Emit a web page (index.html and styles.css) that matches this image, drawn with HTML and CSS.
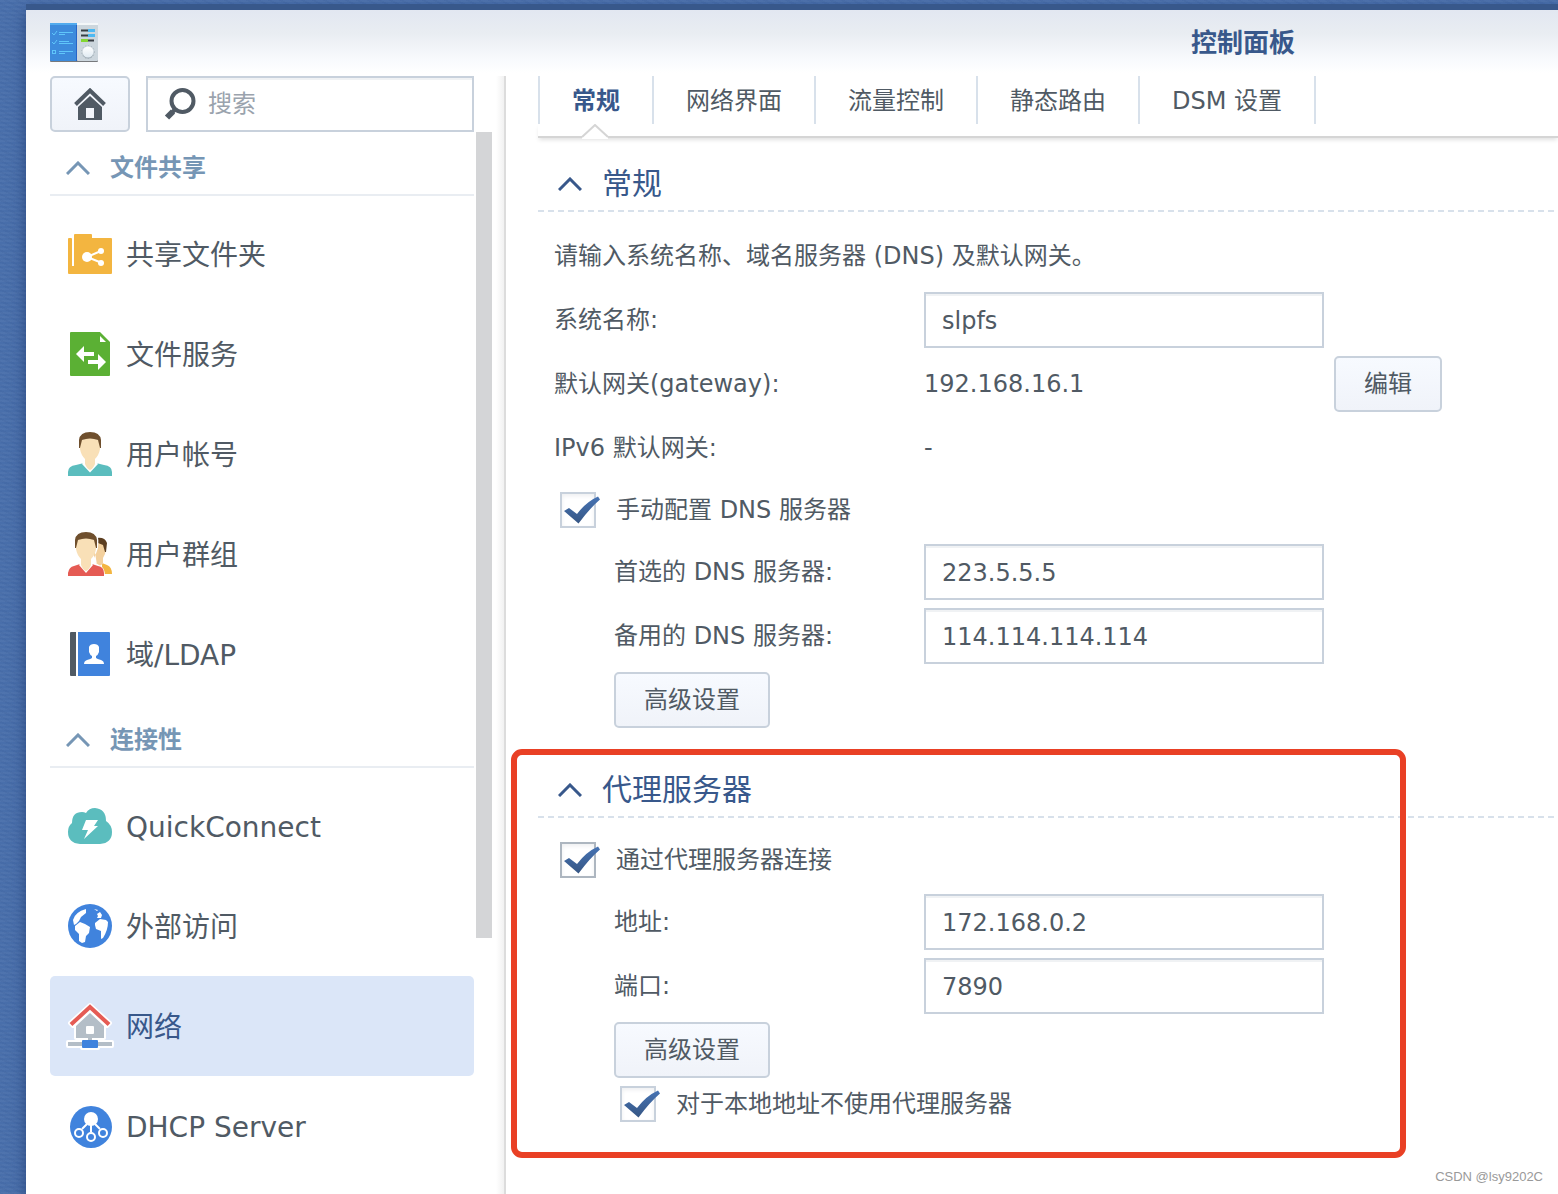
FILE: index.html
```
<!DOCTYPE html>
<html lang="zh-CN">
<head>
    <meta charset="UTF-8">
    <meta name="viewport" content="width=device-width, initial-scale=1.0">
    <title>控制面板</title>
    <link rel="stylesheet" href="styles.css">
</head>
<body>
    <div class="window">
        <header class="titlebar">
            <svg class="app-icon" width="48" height="40" viewBox="0 0 48 40">
                <defs>
                    <linearGradient id="knob" x1="0" y1="0" x2="0" y2="1">
                        <stop offset="0" stop-color="#ffffff"/>
                        <stop offset="1" stop-color="#dfeaf2"/>
                    </linearGradient>
                </defs>
                <rect x="0" y="2" width="48" height="37" rx="1" fill="#77797c"/>
                <rect x="27" y="0" width="21" height="38" rx="1" fill="#ccd6dd"/>
                <rect x="27" y="0" width="21" height="2" fill="#f4f7f9"/>
                <rect x="0" y="0" width="27" height="38" rx="1" fill="#3d8bdc"/>
                <rect x="0" y="0" width="27" height="2" fill="#52abee"/>
                <rect x="26" y="2" width="1" height="36" fill="#2765c8"/>
                <g fill="none" stroke="#5fc6fa" stroke-width="1">
                    <path d="M2 10l2 2 3-4M9 9.500h14M9 11.500h6M2 19l2 2 3-4M9 18.500h10M9 20.500h14M9 28.500h14M9 30.500h6"/>
                    <rect x="2.500" y="27.500" width="3" height="3"/>
                </g>
                <path d="M31 7.500h8M31 12.500h8M38 17.500h6" stroke="#363d43" stroke-width="2"/>
                <path d="M38 7.500h7M38 12.500h7" stroke="#4db9f2" stroke-width="3"/>
                <path d="M31 17.500h7" stroke="#83d633" stroke-width="3"/>
                <circle cx="38" cy="29" r="6.500" fill="none" stroke="#aab6bf" stroke-width="1" stroke-dasharray="1 2"/>
                <circle cx="38" cy="30" r="5.500" fill="#9facb5"/>
                <circle cx="38" cy="29" r="5.500" fill="url(#knob)"/>
            </svg>
            <h1 class="title">控制面板</h1>
        </header>

        <div class="panel">
            <aside class="sidebar">
                <div class="toolbar">
                    <button type="button" class="btn home-btn" aria-label="主页">
                        <svg width="32" height="32" viewBox="0 0 32 32">
                            <path d="M1.500 16.500L16 2.500l14.500 14" fill="none" stroke="#505a64" stroke-width="4"/>
                            <path d="M4 19L16 8l12 11v13h-8V20h-8v12H4z" fill="#505a64"/>
                            <path d="M12 30h8v2h-8z" fill="#505a64"/>
                        </svg>
                    </button>
                    <label class="search">
                        <svg width="32" height="32" viewBox="0 0 32 32">
                            <circle cx="18.500" cy="13" r="11" fill="none" stroke="#505a64" stroke-width="4"/>
                            <path d="M11 21.500L8.500 24" stroke="#505a64" stroke-width="4"/>
                            <path d="M9 23.500L3 29.500" stroke="#505a64" stroke-width="6"/>
                        </svg>
                        <input type="text" placeholder="搜索" aria-label="搜索">
                    </label>
                </div>

                <div class="menu">
                    <nav class="menu-list">
                        <h2 class="group-title">
                            <svg class="chevron" width="24" height="14" viewBox="0 0 24 14"><path d="M1 13L12 2l11 11"/></svg>
                            文件共享
                        </h2>
                        <ul class="group">
                            <li><a href="#" class="item">
                                <svg width="44" height="44" viewBox="0 0 44 44">
                                    <path d="M0 7q0-1 1-1h2q1 0 1 1v27h2V3q0-1 1-1h16q1 0 1 1v3h19q1 0 1 1v34q0 1-1 1H1q-1 0-1-1z" fill="#f3b540"/>
                                    <path d="M34 18.500L19 25l15 6" fill="none" stroke="#fff" stroke-width="2"/>
                                    <circle cx="19" cy="25" r="5" fill="#fff"/>
                                    <circle cx="33" cy="19" r="3" fill="#fff"/>
                                    <circle cx="33" cy="31" r="3" fill="#fff"/>
                                </svg>
                                <span>共享文件夹</span>
                            </a></li>
                            <li><a href="#" class="item">
                                <svg width="44" height="44" viewBox="0 0 44 44">
                                    <path d="M2 1q0-1 1-1h29l10 10v33q0 1-1 1H3q-1 0-1-1z" fill="#5bb034"/>
                                    <path d="M32 4v6h6z" fill="#fff"/>
                                    <path d="M8 22l8-8v6h10v4H16v6zM38 30l-8-8v6H20v4h10v6z" fill="#fff"/>
                                </svg>
                                <span>文件服务</span>
                            </a></li>
                            <li><a href="#" class="item">
                                <svg width="44" height="44" viewBox="0 0 44 44">
                                    <path d="M0 44v-4q0-6 8-7l8-2h12l8 2q8 1 8 7v4z" fill="#5bbdbe"/>
                                    <path d="M14 32l8 8.500 8-8.500-3-4H17z" fill="#fff"/>
                                    <path d="M12 9q10-6 20 0v8q-1 6-5 10v5q-2 5-5 6-3-1-5-6v-5q-4-4-5-10z" fill="#f9e0b7"/>
                                    <path d="M11 16V8q1-8 11-8t11 8v8h-1l-2-8q-8-3-16 0l-2 8z" fill="#6f4f2d"/>
                                </svg>
                                <span>用户帐号</span>
                            </a></li>
                            <li><a href="#" class="item">
                                <svg width="44" height="44" viewBox="0 0 44 44">
                                    <path d="M34 42V31l5 2q5 2 5 9z" fill="#f3b540"/>
                                    <path d="M26 10l10-3q4 12-1 19v6l-4 2-5-5z" fill="#f3d09d"/>
                                    <path d="M29 6q8-1 10 5l-1 9h-1l-2-7-5-2z" fill="#5c3e20"/>
                                    <path d="M24 2h5q2 4 1 14-2 6-4 10v4l5 3q6 2 6 11h-8V33z" fill="#fff"/>
                                    <path d="M0 44v-3q1-6 6-7l6-2h12l6 2q6 1 6 7v3z" fill="#e55b54"/>
                                    <path d="M11 33l7 8 7-8-3-4h-8z" fill="#fff"/>
                                    <path d="M8 9q10-6 20 0v8q-1 6-5 10v6q-2 5-5 6-3-1-5-6v-6q-4-4-5-10z" fill="#f9e0b7"/>
                                    <path d="M7 16V8q1-8 11-8t11 8v8h-1l-2-8q-8-3-16 0l-2 8z" fill="#6f4f2d"/>
                                </svg>
                                <span>用户群组</span>
                            </a></li>
                            <li><a href="#" class="item">
                                <svg width="44" height="44" viewBox="0 0 44 44">
                                    <path d="M3 0h5v44H3q-1 0-1-1V1q0-1 1-1z" fill="#505a64"/>
                                    <path d="M10 0h31q1 0 1 1v42q0 1-1 1H10z" fill="#4083dd"/>
                                    <path d="M21 15q1-3 5-3t5 3v5q-1 3-3 4v2q1 1 5 2 3 1 3 4H16q0-3 3-4 4-1 5-2v-2q-2-1-3-4z" fill="#fff"/>
                                </svg>
                                <span>域/LDAP</span>
                            </a></li>
                        </ul>

                        <h2 class="group-title">
                            <svg class="chevron" width="24" height="14" viewBox="0 0 24 14"><path d="M1 13L12 2l11 11"/></svg>
                            连接性
                        </h2>
                        <ul class="group">
                            <li><a href="#" class="item">
                                <svg width="44" height="44" viewBox="0 0 44 44">
                                    <path d="M12 40Q0 39 0 28q0-6 4-9Q4 8 14 8q2 0 4 1 3-5 9-5 11 1 11 13 6 4 6 11 0 11-12 12z" fill="#5bbdbe"/>
                                    <path d="M18 16h12l-4 6h4L16 35l4-9h-6z" fill="#fff"/>
                                </svg>
                                <span>QuickConnect</span>
                            </a></li>
                            <li><a href="#" class="item">
                                <svg width="44" height="44" viewBox="0 0 44 44">
                                    <circle cx="22" cy="22" r="22" fill="#4083dd"/>
                                    <path d="M18 5v4l-5 4-2 4-3 3-2 1-1-5q2-8 13-11z" fill="#fff"/>
                                    <path d="M7 22l5-4 5 2 5 3-1 6-3 3-1 6-3 1-3-2v-7l-4-4z" fill="#fff"/>
                                    <path d="M27 19l5-4 6 1 2 2q0 8-5 16l-2 1v-8l-5-2-1-4zM29 10l3-2 2 3-1 3h-4l1-2zM26 5l4 1-1 1z" fill="#fff"/>
                                </svg>
                                <span>外部访问</span>
                            </a></li>
                            <li><a href="#" class="item active">
                                <svg width="44" height="44" viewBox="0 0 44 44">
                                    <g stroke="#fff" stroke-width="4" stroke-linejoin="round" fill="#fff">
                                        <path d="M22 1L2 19l3 3 3-2v14h28V20l3 2 3-3zM0 38h14v-2h16v2h14v4H30v2H14v-2H0z"/>
                                    </g>
                                    <path d="M8 22L22 9l14 13v12H24v4h20v4H0v-4h20v-4H8z" fill="#b4bec7"/>
                                    <rect x="18" y="22" width="8" height="8" rx="1" fill="#fff"/>
                                    <path d="M3 20.500L22 3l19 17.500" fill="none" stroke="#e55b54" stroke-width="4"/>
                                    <rect x="14" y="36" width="16" height="8" rx="1" fill="#4083dd"/>
                                </svg>
                                <span>网络</span>
                            </a></li>
                            <li><a href="#" class="item">
                                <svg width="44" height="44" viewBox="0 0 44 44">
                                    <circle cx="23" cy="23" r="21" fill="#4083dd"/>
                                    <g fill="none" stroke="#fff" stroke-width="2">
                                        <path d="M19 20l-5 5M23 20v8M27 20l5 5"/>
                                        <circle cx="11" cy="29" r="4"/>
                                        <circle cx="23" cy="33" r="4"/>
                                        <circle cx="35" cy="29" r="4"/>
                                    </g>
                                    <circle cx="23" cy="15" r="7" fill="#fff"/>
                                </svg>
                                <span>DHCP Server</span>
                            </a></li>
                        </ul>
                    </nav>
                    <div class="scrollbar"></div>
                </div>
            </aside>

            <main class="content">
                <div class="tabs">
                    <button type="button" class="tab active">常规</button>
                    <button type="button" class="tab">网络界面</button>
                    <button type="button" class="tab">流量控制</button>
                    <button type="button" class="tab">静态路由</button>
                    <button type="button" class="tab">DSM 设置</button>
                </div>
                <div class="tab-line">
                    <svg class="notch" width="28" height="15" viewBox="0 0 28 15">
                        <path d="M1 15V13L14 1l13 12v2z" fill="#fff"/>
                        <path d="M1 13L14 1l13 12" fill="none" stroke="#d5d5d5" stroke-width="2"/>
                    </svg>
                </div>

                <section class="section">
                    <h2 class="section-title">
                        <svg class="chevron" width="24" height="14" viewBox="0 0 24 14"><path d="M1 13L12 2l11 11"/></svg>
                        常规
                    </h2>
                    <div class="rows">
                        <p class="row">请输入系统名称、域名服务器 (DNS) 及默认网关。</p>
                        <div class="row">
                            <label class="name" for="hostname">系统名称:</label>
                            <input class="field" type="text" id="hostname" value="slpfs">
                        </div>
                        <div class="row">
                            <span class="name">默认网关(gateway):</span>
                            <span class="value">192.168.16.1</span>
                            <button type="button" class="btn">编辑</button>
                        </div>
                        <div class="row">
                            <span class="name">IPv6 默认网关:</span>
                            <span class="value">-</span>
                        </div>
                        <label class="check">
                            <span class="box">
                                <input type="checkbox" checked>
                                <svg class="tick" width="40" height="36" viewBox="0 0 40 36"><path d="M4 19l5-3 8 6q9-12 21-17.500l2 3Q30 16 18.500 31.500z"/></svg>
                            </span>
                            手动配置 DNS 服务器
                        </label>
                        <div class="row indent">
                            <label class="name" for="dns1">首选的 DNS 服务器:</label>
                            <input class="field" type="text" id="dns1" value="223.5.5.5">
                        </div>
                        <div class="row indent">
                            <label class="name" for="dns2">备用的 DNS 服务器:</label>
                            <input class="field" type="text" id="dns2" value="114.114.114.114">
                        </div>
                        <div class="row indent">
                            <button type="button" class="btn">高级设置</button>
                        </div>
                    </div>
                </section>

                <section class="section marked">
                    <h2 class="section-title">
                        <svg class="chevron" width="24" height="14" viewBox="0 0 24 14"><path d="M1 13L12 2l11 11"/></svg>
                        代理服务器
                    </h2>
                    <div class="rows">
                        <label class="check focus">
                            <span class="box">
                                <input type="checkbox" checked>
                                <svg class="tick" width="40" height="36" viewBox="0 0 40 36"><path d="M4 19l5-3 8 6q9-12 21-17.500l2 3Q30 16 18.500 31.500z"/></svg>
                            </span>
                            通过代理服务器连接
                        </label>
                        <div class="row indent">
                            <label class="name" for="addr">地址:</label>
                            <input class="field" type="text" id="addr" value="172.168.0.2">
                        </div>
                        <div class="row indent">
                            <label class="name" for="port">端口:</label>
                            <input class="field" type="text" id="port" value="7890">
                        </div>
                        <div class="row indent">
                            <button type="button" class="btn">高级设置</button>
                        </div>
                        <label class="check nested">
                            <span class="box">
                                <input type="checkbox" checked>
                                <svg class="tick" width="40" height="36" viewBox="0 0 40 36"><path d="M4 19l5-3 8 6q9-12 21-17.500l2 3Q30 16 18.500 31.500z"/></svg>
                            </span>
                            对于本地地址不使用代理服务器
                        </label>
                    </div>
                </section>
            </main>
        </div>
    </div>
    <div class="watermark">CSDN @lsy9202C</div>

    <!-- shared gradient for the tick marks -->
    <svg class="defs" width="0" height="0">
        <defs>
            <linearGradient id="tick-fill" x1="0" y1="0" x2="0" y2="1">
                <stop offset="0" stop-color="#4673b4"/>
                <stop offset="1" stop-color="#365684"/>
            </linearGradient>
        </defs>
    </svg>
</body>
</html>
```

FILE: styles.css
```
*, *::after {
    box-sizing: border-box;
}
body {
    margin: 0;
    min-height: 100vh;
    display: flex;
    position: relative;
    overflow: hidden;
    padding: 4px 0 0 26px;
    background-color: #496fab;
    background-image:
        repeating-linear-gradient(27deg, rgba(30, 60, 120, 0.07) 0 2px, transparent 2px 5px),
        repeating-linear-gradient(0deg, rgba(255, 255, 255, 0.03) 0 2px, transparent 2px 4px);
    color: #505a64;
    font-family: "DejaVu Sans", "Noto Sans CJK SC", sans-serif;
    font-size: 24px;
    line-height: 32px;
}
button, input {
    font: inherit;
    color: inherit;
}
h1, h2, p, ul {
    margin: 0;
    padding: 0;
    font-weight: normal;
}
.window {
    flex: 1;
    display: flex;
    flex-direction: column;
    background: #fff;
    border-top: 6px solid #38588b;
    box-shadow: 0 8px 14px rgba(10, 30, 80, 0.5);
}

/* title bar */
.titlebar {
    display: flex;
    align-items: center;
    justify-content: space-between;
    height: 66px;
    padding: 0 263px 0 24px;
    background: linear-gradient(#e2e7f1, #e9edf2 35%, #f8fafd 75%, #fff 95%);
}
.title {
    font-size: 26px;
    font-weight: bold;
    color: #38588b;
}

.panel {
    flex: 1;
    display: flex;
}

/* sidebar */
.sidebar {
    flex: none;
    width: 480px;
    padding-left: 24px;
    display: flex;
    flex-direction: column;
    border-right: 2px solid #dcdcdc;
    background: linear-gradient(to left, #f1f1f1, #fff 8px);
}
.toolbar {
    display: flex;
    gap: 16px;
    width: 424px;
}
.btn {
    height: 56px;
    padding: 0 28px;
    border: 2px solid #c8d1dc;
    border-radius: 5px;
    background: linear-gradient(#f7faff, #f0f3f9);
    cursor: pointer;
}
.home-btn {
    flex: none;
    width: 80px;
    padding: 0;
}
.home-btn svg {
    display: block;
    margin: auto;
}
.search, .field {
    height: 56px;
    border: 2px solid #c8d1dc;
    background: #fff;
    box-shadow: inset 0 2px 0 #f0f2f4;
}
.search {
    flex: 1;
    min-width: 0;
    display: flex;
    align-items: center;
    gap: 12px;
    padding: 0 16px;
}
.search svg {
    flex: none;
}
.search input {
    flex: 1;
    min-width: 0;
    padding: 0;
    border: none;
    outline: none;
    background: none;
}
.search input::placeholder {
    color: #9aa3ad;
}
.menu {
    flex: 1;
    display: flex;
    gap: 2px;
}
.menu-list {
    width: 424px;
}
.scrollbar {
    width: 16px;
    height: 806px;
    background: #d4d5d7;
}
.chevron {
    flex: none;
    fill: none;
    stroke: currentColor;
    stroke-width: 3;
}
.group-title {
    display: flex;
    align-items: center;
    gap: 20px;
    height: 64px;
    padding: 10px 16px 0;
    border-bottom: 2px solid #e9edf2;
    font-size: 24px;
    font-weight: bold;
    color: #7696b5;
}
.group {
    padding-top: 8px;
    list-style: none;
}
.item {
    display: flex;
    align-items: center;
    gap: 14px;
    height: 100px;
    padding: 0 18px;
    border-radius: 5px;
    font-size: 28px;
    color: #505a64;
    text-decoration: none;
}
.item svg {
    overflow: visible;
}
.item span {
    padding-top: 4px;
}
.item.active {
    background: #dbe6f8;
    color: #38588b;
}

/* tabs */
.content {
    flex: 1;
    min-width: 0;
    padding-left: 32px;
}
.tabs {
    display: flex;
}
.tab {
    height: 48px;
    padding: 2px 32px 0;
    border: none;
    border-right: 2px solid #d8e1eb;
    background: none;
    cursor: pointer;
}
.tab:first-child {
    border-left: 2px solid #d8e1eb;
}
.tab.active {
    font-weight: bold;
    color: #38588b;
}
.tab-line {
    position: relative;
    height: 14px;
    border-bottom: 2px solid #d5d5d5;
    box-shadow: 0 3px 4px -1px rgba(0, 0, 0, 0.12);
}
.notch {
    position: absolute;
    left: 43px;
    top: 0;
}

/* form */
.section {
    margin-top: 18px;
}
.section-title {
    display: flex;
    align-items: center;
    gap: 20px;
    height: 56px;
    padding: 0 20px;
    font-size: 30px;
    color: #38588b;
    background: repeating-linear-gradient(to right, #d8e1eb 0 6px, transparent 6px 10px) bottom / 100% 2px no-repeat;
}
.rows {
    display: flex;
    flex-direction: column;
    gap: 8px;
    padding: 16px 16px 0;
}
.row {
    display: flex;
    align-items: center;
    height: 56px;
}
.name {
    width: 370px;
}
.indent {
    padding-left: 60px;
}
.indent .name {
    width: 310px;
}
.field {
    width: 400px;
    padding: 2px 16px 0;
}
.value {
    width: 410px;
}
.check {
    display: flex;
    align-items: center;
    gap: 20px;
    height: 36px;
    margin: 8px 0;
    padding-left: 6px;
}
.check.nested {
    margin: 0;
    padding-left: 66px;
}
.box {
    position: relative;
    width: 36px;
    height: 36px;
}
.box input {
    appearance: none;
    display: block;
    width: 36px;
    height: 36px;
    margin: 0;
    border: 2px solid #c8d1dc;
    background: #fff;
    box-shadow: inset 0 2px 4px #eeeff1;
}
.check.focus input {
    border-color: #adb6c0;
}
.tick {
    position: absolute;
    left: 0;
    top: 0;
    fill: url(#tick-fill);
    pointer-events: none;
    visibility: hidden;
}
.box input:checked + .tick {
    visibility: visible;
}

/* red frame round the proxy settings */
.marked {
    position: relative;
    margin-top: 34px;
}
.marked::after {
    content: "";
    position: absolute;
    left: -27px;
    top: -13px;
    bottom: -36px;
    width: 895px;
    border: 6px solid #e94025;
    border-radius: 11px;
    pointer-events: none;
}

.watermark {
    position: absolute;
    right: 15px;
    bottom: 8px;
    font-family: "Liberation Sans", Arial, sans-serif;
    font-size: 13px;
    line-height: 18px;
    color: #999;
}
.defs {
    position: absolute;
}
```
